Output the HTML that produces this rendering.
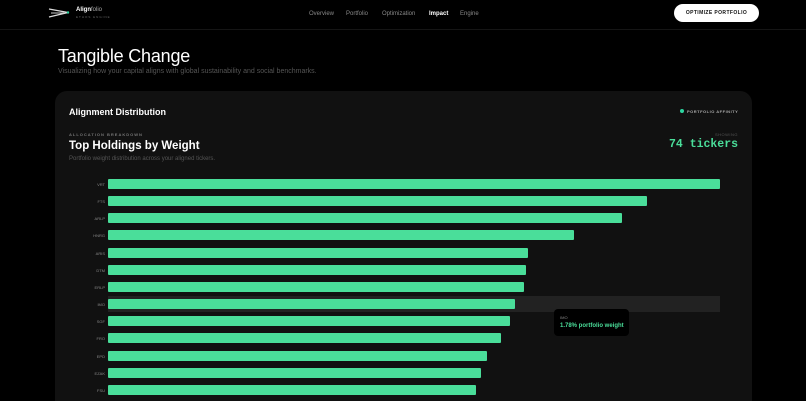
<!DOCTYPE html>
<html style="overflow:hidden;height:401px"><head><style>
*{margin:0;padding:0;box-sizing:border-box}
body{width:806px;height:401px;background:#000;font-family:"Liberation Sans",sans-serif;overflow:hidden;position:relative;color:#fff}
.a{position:absolute}
.nav{font-size:6px;color:#888;top:11px}
.bar{position:absolute;left:108px;height:10px;background:#4ade9a;border-radius:1px}
.lbl{position:absolute;right:701px;font-size:4px;color:#888;text-align:right}
</style></head><body>
<div class="a" style="left:0;top:29px;width:806px;height:1px;background:#151515"></div>
<svg class="a" style="left:48px;top:7px" width="22" height="12" viewBox="0 0 22 12"><path d="M1 2 L20 5.5 L1 10" stroke="#ddd" stroke-width="1.3" fill="none"/><path d="M3 6 L16 6" stroke="#ccc" stroke-width="1"/><circle cx="20" cy="5.5" r="1.2" fill="#2dd4a0"/></svg>
<div class="a" style="left:76px;top:7px;font-size:6px;font-weight:bold">Align<span style="font-weight:normal;color:#aaa">folio</span></div>
<div class="a" style="left:76px;top:15px;font-size:3px;letter-spacing:1px;color:#666">ETHOS ENGINE</div>
<div class="a nav" style="left:309px">Overview</div>
<div class="a nav" style="left:346px">Portfolio</div>
<div class="a nav" style="left:382px">Optimization</div>
<div class="a nav" style="left:429px;color:#fff;font-weight:bold">Impact</div>
<div class="a nav" style="left:460px">Engine</div>
<div class="a" style="left:674px;top:4px;width:85px;height:18px;border-radius:9px;background:#fff;color:#111;font-size:5px;font-weight:bold;letter-spacing:.4px;text-align:center;line-height:18px">OPTIMIZE PORTFOLIO</div>
<div class="a" style="left:58px;top:46px;font-size:18px;font-weight:500;letter-spacing:-.2px">Tangible Change</div>
<div class="a" style="left:58px;top:68px;font-size:7px;color:#555">Visualizing how your capital aligns with global sustainability and social benchmarks.</div>
<div class="a" style="left:55px;top:91px;width:697px;height:330px;background:#111;border-radius:12px"></div>
<div class="a" style="left:69px;top:107px;font-size:9px;font-weight:bold">Alignment Distribution</div>
<div class="a" style="left:680px;top:109px;width:4px;height:4px;border-radius:2px;background:#2dd4a0"></div>
<div class="a" style="left:687px;top:109px;font-size:4px;font-weight:bold;letter-spacing:.5px;color:#aaa">PORTFOLIO AFFINITY</div>
<div class="a" style="left:69px;top:132px;font-size:4px;letter-spacing:1px;color:#777;font-weight:bold">ALLOCATION BREAKDOWN</div>
<div class="a" style="left:69px;top:140px;font-size:11.5px;font-weight:bold">Top Holdings by Weight</div>
<div class="a" style="left:69px;top:156px;font-size:6px;color:#555">Portfolio weight distribution across your aligned tickers.</div>
<div class="a" style="right:68px;top:132px;font-size:4px;letter-spacing:.5px;color:#555">SHOWING</div>
<div class="a" style="right:68px;top:138px;font-size:11.5px;font-weight:bold;font-family:'Liberation Mono',monospace;color:#4ade9a">74 tickers</div>
<div class="a" style="left:108px;top:296px;width:612px;height:16px;background:#222"></div>
<div class="bar" style="top:179px;width:612px"></div><div class="lbl" style="top:182px">VRT</div>
<div class="bar" style="top:196px;width:539px"></div><div class="lbl" style="top:199px">FTS</div>
<div class="bar" style="top:213px;width:514px"></div><div class="lbl" style="top:216px">ARLP</div>
<div class="bar" style="top:230px;width:466px"></div><div class="lbl" style="top:233px">HNRG</div>
<div class="bar" style="top:248px;width:420px"></div><div class="lbl" style="top:251px">ARIS</div>
<div class="bar" style="top:265px;width:418px"></div><div class="lbl" style="top:268px">DTM</div>
<div class="bar" style="top:282px;width:416px"></div><div class="lbl" style="top:285px">ERLP</div>
<div class="bar" style="top:299px;width:407px"></div><div class="lbl" style="top:302px">IMO</div>
<div class="bar" style="top:316px;width:402px"></div><div class="lbl" style="top:319px">SGF</div>
<div class="bar" style="top:333px;width:393px"></div><div class="lbl" style="top:336px">FRO</div>
<div class="bar" style="top:351px;width:379px"></div><div class="lbl" style="top:354px">EPD</div>
<div class="bar" style="top:368px;width:373px"></div><div class="lbl" style="top:371px">EZAK</div>
<div class="bar" style="top:385px;width:368px"></div><div class="lbl" style="top:388px">FSU</div>
<div class="a" style="left:554px;top:309px;width:75px;height:27px;background:#000;border-radius:4px"></div>
<div class="a" style="left:560px;top:315px;font-size:4px;color:#888">IMO</div>
<div class="a" style="left:560px;top:323px;font-size:6px;font-weight:bold;color:#4ade9a">1.78% portfolio weight</div>
</body></html>
